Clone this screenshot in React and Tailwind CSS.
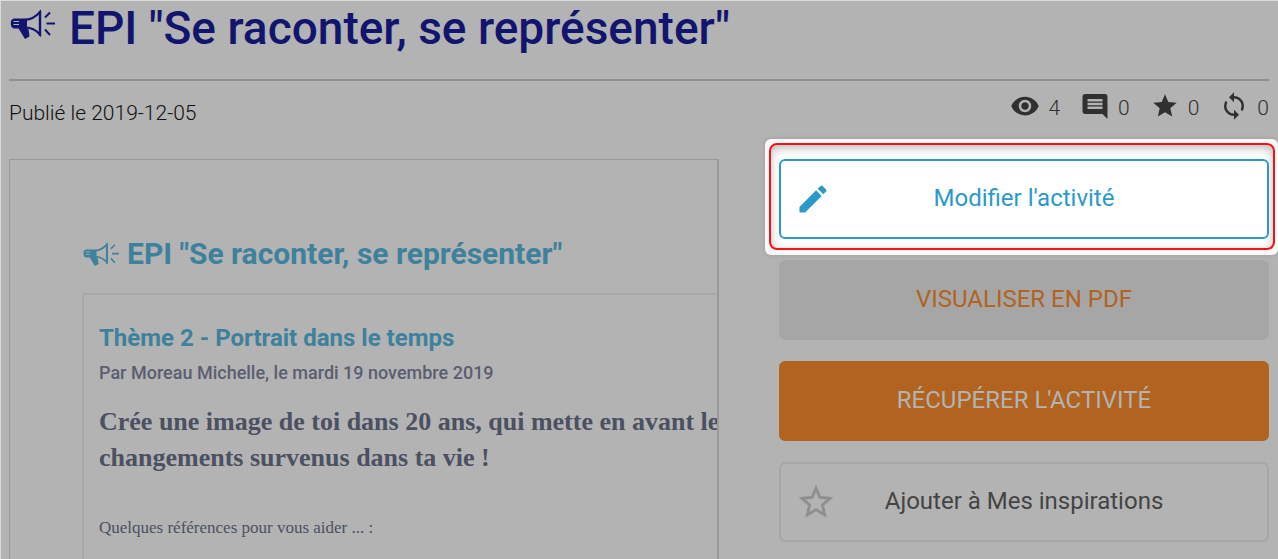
import React from "react";
import { MdComment, MdEdit, MdStar, MdStarBorder, MdSync, MdVisibility } from "react-icons/md";

function Megaphone({ className }) {
  return (
    <svg viewBox="0 0 46 30" className={className} fill="none" stroke="currentColor" aria-hidden="true">
      <path d="M6 9.500H18V20H19.500L20.500 27.500L16 30L9.500 19.500H6C2.500 19.500 1.800 17 1.800 14.500S2.500 9.500 6 9.500Z" fill="currentColor" stroke="none" />
      <path d="M16.500 10.700C23 10.500 27 7.500 31 3V25.500C27 21 23 18.500 16.500 18.500" strokeWidth="2" />
      <path d="M31 2V27" strokeWidth="2.400" />
      <path d="M4.500 12.500H10M4.500 15.500H10" stroke="#b3b3b3" strokeWidth="1" />
      <path d="M36 8.500L41 3.500M37.500 14.500H46M36 20.500L41 26" strokeWidth="2" />
    </svg>
  );
}

function Stat({ icon, label, value }) {
  return (
    <li className="flex items-center gap-2" title={label}>
      <span className="flex size-[30px] items-center justify-center text-[#303030]">{icon}</span>
      <span className="pt-1 text-[21px] leading-6 font-light text-[#303030]">{value}</span>
    </li>
  );
}

const actionBase =
  "relative flex h-20 w-full items-center justify-center rounded-md border-2 px-4 pb-0.5 text-2xl";

export default function App() {
  return (
    <div className="flex min-h-screen flex-col overflow-hidden border-t border-l border-[#dadcda] bg-[#b3b3b3] pr-[9px] pl-2 font-['Roboto',sans-serif]">
      <header className="flex items-start gap-3.5 border-b-2 border-[#8f8f8f] pb-6 text-[#12156f]">
        <Megaphone className="mt-2 h-[30px] w-[46px] shrink-0" />
        <h1 className="text-[46px] leading-[54px] font-medium">EPI "Se raconter, se représenter"</h1>
      </header>

      <div className="flex h-[78px] items-start justify-between">
        <p className="pt-5 text-[21px] leading-6 font-light text-[#101010]">Publié le 2019-12-05</p>
        <ul className="flex gap-5 pt-[10px]">
          <Stat icon={<MdVisibility size={30} />} label="Vues" value="4" />
          <Stat icon={<MdComment size={31} />} label="Commentaires" value="0" />
          <Stat icon={<MdStar size={28} />} label="Inspirations" value="0" />
          <Stat icon={<MdSync size={30} />} label="Récupérations" value="0" />
        </ul>
      </div>

      <main className="grid flex-1 grid-cols-[71fr_49fr] gap-[60px]">
        <article className="flex min-w-0 flex-col overflow-hidden border-t border-r-2 border-l border-[#999999] pt-[76px] pl-[72px]">
          <div className="mb-[21px] flex items-center gap-2 text-[#3d819c]">
            <Megaphone className="h-6 w-[37px] shrink-0" />
            <h2 className="text-[30px] leading-9 font-bold whitespace-nowrap">EPI "Se raconter, se représenter"</h2>
          </div>
          <section className="flex-1 border-t-2 border-l-2 border-[#a9a9a9] pt-[27px] pl-[15px] whitespace-nowrap text-[#4b5062]">
            <h3 className="text-2xl leading-8 font-bold text-[#3d819c]">Thème 2 - Portrait dans le temps</h3>
            <p className="mt-[7px] text-lg leading-6 font-medium text-[#5b5e72]">
              Par Moreau Michelle, le mardi 19 novembre 2019
            </p>
            <p className="mt-[19px] font-['Liberation_Serif',serif] text-[26px] leading-9 font-bold">
              Crée une image de toi dans 20 ans, qui mette en avant les
              <br />
              changements survenus dans ta vie !
            </p>
            <p className="mt-10 font-['Liberation_Serif',serif] text-[17px] leading-6">
              Quelques références pour vous aider ... :
            </p>
          </section>
        </article>

        <aside className="flex flex-col gap-[21px] pb-[17px]">
          <div className="relative">
            <div className="absolute -top-5 -right-[9px] -bottom-4 -left-[14px] rounded-md bg-[#f8f8f8] p-1 pr-[3px] pb-[5px] shadow-[0_0_4px_#999999]">
              <div className="h-full rounded-lg border-2 border-[#fa0f14] bg-white shadow-[inset_0_3px_10px_#bbbbbb]" />
            </div>
            <button type="button" className={actionBase + " border-[#2b9ac8] bg-white text-[#2b9ac8]"}>
              <MdEdit size={36} className="absolute inset-y-0 left-[14px] my-auto" />
              Modifier l'activité
            </button>
          </div>
          <button type="button" className={actionBase + " border-[#a6a6a6] bg-[#a6a6a6] text-[#b26320]"}>
            VISUALISER EN PDF
          </button>
          <button type="button" className={actionBase + " border-[#b26320] bg-[#b26320] text-[#b3b3b3]"}>
            RÉCUPÉRER L'ACTIVITÉ
          </button>
          <button type="button" className={actionBase + " border-[#a6a6a6] bg-transparent text-[#444444]"}>
            <MdStarBorder size={42} className="absolute inset-y-0 left-[14px] my-auto text-[#8f8f8f]" />
            Ajouter à Mes inspirations
          </button>
        </aside>
      </main>
    </div>
  );
}
